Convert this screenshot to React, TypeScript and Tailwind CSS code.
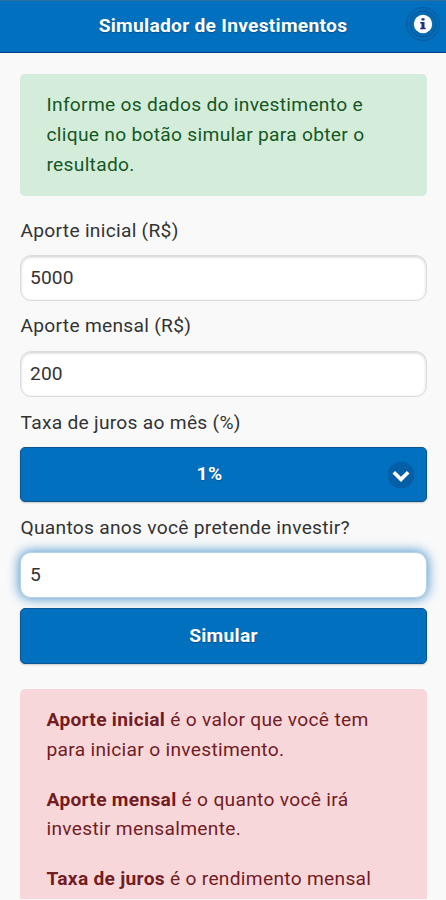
import { useState } from "react";

const inputClass =
  "block w-full h-[46px] px-[9px] pb-px rounded-[11px] border bg-white text-[19.2px] tracking-[0.15px] text-[#333333] outline-none";

const plainInput =
  "border-[#dcdcdc] shadow-[inset_0_1px_3px_rgba(0,0,0,0.2)]";

const activeInput = "border-[#b5d3e8] shadow-[0_0_12px_1px_#4d97cc]";

const labelClass =
  "block pl-[0.5px] text-[19.2px] leading-[30px] tracking-[0.28px] text-[#333333]";

const buttonClass =
  "relative flex w-full items-center justify-center rounded-[5px] border border-[#0b5593] bg-[#0070bf] text-[19.2px] font-bold tracking-[0.3px] text-white shadow-[0_1px_2px_rgba(0,0,0,0.2)] [text-shadow:0_1px_1px_#05508a]";

const alertClass =
  "px-[26.5px] text-[19.2px] leading-[29.8px] tracking-[0.29px]";

function InfoIcon() {
  return (
    <svg width="36" height="36" viewBox="0 0 36 36">
      <circle cx="18" cy="18" r="16.5" fill="#046bb6" stroke="#075fa3" strokeWidth="1.2" />
      <circle cx="18" cy="18" r="12.8" fill="#0568b0" stroke="#075fa3" strokeWidth="1.2" />
      <circle cx="18" cy="18" r="9.2" fill="#ffffff" />
      <path
        d="M16.5 12.2h3v2.3h-3zM15.2 16h4.3v5.7h1.2v1.5h-5.5v-1.5h1.3v-4.2h-1.3z"
        fill="#1d2f88"
      />
    </svg>
  );
}

function ArrowIcon() {
  return (
    <svg width="28" height="28" viewBox="0 0 28 28">
      <circle cx="14" cy="14" r="13.3" fill="#045fa6" />
      <path d="M6.8 11.2l7.2 7.1 7.2-7.1" fill="none" stroke="#ffffff" strokeWidth="3.7" />
    </svg>
  );
}

export default function App() {
  const [initial, setInitial] = useState("5000");
  const [monthly, setMonthly] = useState("200");
  const [years, setYears] = useState("5");

  return (
    <div className="h-[900px] w-[446px] overflow-hidden bg-[#f9f9f9] font-[Roboto,sans-serif]">
      <header className="relative flex h-[53px] items-center justify-center border-b border-t border-b-[#06398a] border-t-[#2c6f9f] bg-[#0070bf]">
        <h1 className="text-[19.2px] font-bold tracking-[0.28px] text-white [text-shadow:0_1px_1px_#05508a]">
          Simulador de Investimentos
        </h1>
        <button aria-label="Informações" className="absolute right-[5px] top-[5px]">
          <InfoIcon />
        </button>
      </header>

      <main className="pl-5 pr-[19px] pt-[21px]">
        <div className={`${alertClass} h-[122px] rounded-[5px] bg-[#d4edda] pt-[16px] text-[#155724]`}>
          Informe os dados do investimento e clique no botão simular para obter o
          resultado.
        </div>

        <label className={`${labelClass} mt-[20px]`}>Aporte inicial (R$)</label>
        <input
          className={`${inputClass} ${plainInput} mt-[9px]`}
          value={initial}
          onChange={(e) => setInitial(e.target.value)}
        />

        <label className={`${labelClass} mt-[10px]`}>Aporte mensal (R$)</label>
        <input
          className={`${inputClass} ${plainInput} mt-[10px]`}
          value={monthly}
          onChange={(e) => setMonthly(e.target.value)}
        />

        <label className={`${labelClass} mt-[11px]`}>Taxa de juros ao mês (%)</label>
        <button className={`${buttonClass} mt-[9px] h-[55px] pr-[28px]`}>
          1%
          <span className="absolute right-[11px] top-[13px]">
            <ArrowIcon />
          </span>
        </button>

        <label className={`${labelClass} mt-[11px]`}>
          Quantos anos você pretende investir?
        </label>
        <input
          className={`${inputClass} ${activeInput} mt-[9px]`}
          value={years}
          onChange={(e) => setYears(e.target.value)}
        />

        <button className={`${buttonClass} mt-[10px] h-[56px]`}>Simular</button>

        <div className={`${alertClass} mt-[25px] h-[210px] rounded-t-[5px] bg-[#f8d7da] pt-[16px] text-[#721c24]`}>
          <p className="mb-5">
            <b>Aporte inicial</b> é o valor que você tem
            <br />
            para iniciar o investimento.
          </p>
          <p className="mb-5">
            <b>Aporte mensal</b> é o quanto você irá
            <br />
            investir mensalmente.
          </p>
          <p>
            <b>Taxa de juros</b> é o rendimento mensal
          </p>
        </div>
      </main>
    </div>
  );
}
